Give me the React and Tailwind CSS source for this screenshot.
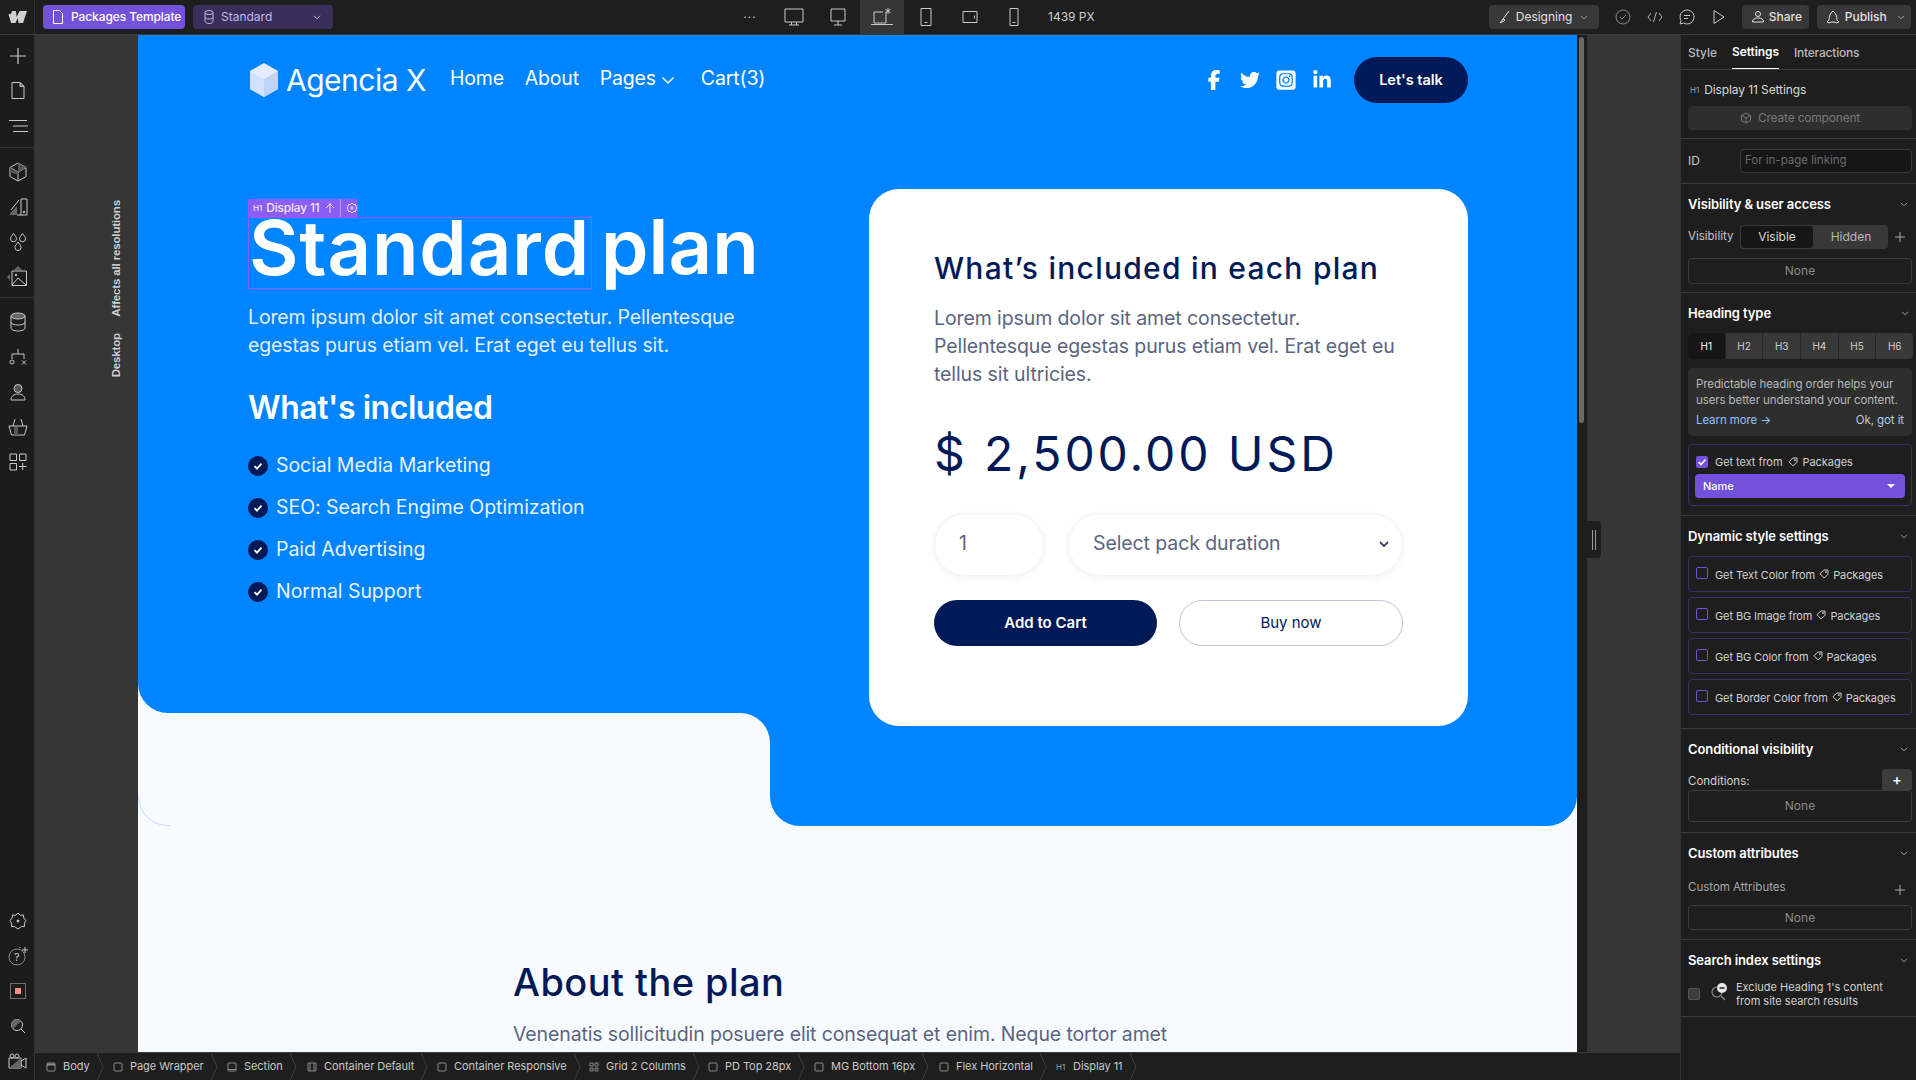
import React from "react";
import { FaFacebookF, FaTwitter, FaLinkedinIn, FaSquareInstagram } from "react-icons/fa6";

const S = ({ w = 16, h = 16, vb, children, className = "" }) => (
  <svg width={w} height={h} viewBox={vb || `0 0 ${w} ${h}`} fill="none" stroke="currentColor" strokeWidth="1" className={"shrink-0 " + className}>{children}</svg>
);
const Chev = ({ className = "" }) => (
  <S w={8} h={5} className={className}><path d="M1 .8l3 3 3-3" /></S>
);
const Tag = () => (
  <S w={10} h={10} className="text-[#d0d0d0]"><path d="M1 4.8L4.8 1H9v4.2L5.2 9z" /><circle cx="6.9" cy="3.1" r=".6" /></S>
);
const Plus = ({ className = "" }) => (
  <S w={12} h={12} className={className}><path d="M6 1v10M1 6h10" /></S>
);

const railTop = [
  <S w={20} h={20}><path d="M10 2v16M2 10h16" strokeWidth="1.2" /></S>,
  <S w={14} h={19}><path d="M1 1.5h8l4 4v12H1z" /><path d="M9 1.5l4 4H9z" fill="#666" /></S>,
  <S w={20} h={14}><path d="M1 1.5h18M5 7h15M5 12.5h15" /></S>,
];
const railMid = [
  <S w={18} h={20}><path d="M9 1l8 4.5v9L9 19l-8-4.5v-9z" /><path d="M1 5.5L9 10l8-4.5M9 10v9" /><path d="M9 1l8 4.5L9 10z M1 5.5L9 10v3l-8-3z" fill="#555" stroke="none" /></S>,
  <S w={20} h={20}><path d="M1 18l8-9v9z" fill="#666" stroke="none" /><path d="M3 13l8-10M13 2h6v16h-6zM9 18h4" /><circle cx="16" cy="15" r=".8" fill="currentColor" /></S>,
  <S w={18} h={20}><path d="M4.5 1.5c2 2.600 3 4 3 5.300a3 3 0 0 1-6 0c0-1.300 1-2.700 3-5.300zM13.500 1.500c2 2.600 3 4 3 5.300a3 3 0 0 1-6 0c0-1.300 1-2.700 3-5.300zM9 10c2 2.600 3 4 3 5.500a3 3 0 0 1-6 0c0-1.500 1-2.900 3-5.500z" /></S>,
  <S w={22} h={22}><path d="M11 0l4 4H7zM0 11l3-3v6z" fill="#666" stroke="none" /><path d="M5 5h14.500v14.500H5z" /><path d="M5 19l6-7 8 7" /><circle cx="9" cy="9" r=".8" fill="currentColor" /></S>,
];
const railCms = [
  <S w={16} h={20}><ellipse cx="8" cy="4" rx="7" ry="3" fill="#666" /><path d="M1 4v12c0 1.700 3 3 7 3s7-1.300 7-3V4M1 10c0 1.700 3 3 7 3s7-1.300 7-3" /></S>,
  <S w={18} h={18}><path d="M9 1v5M3 11V6h12v5" /><circle cx="3" cy="14" r="2" /><path d="M13 12.500l4 4M17 12.500l-4 4" /></S>,
  <S w={16} h={18}><circle cx="8" cy="5.500" r="4" fill="#555" stroke="currentColor" /><path d="M1 17c0-4 3-6 7-6s7 2 7 6z" /></S>,
  <S w={20} h={18}><path d="M1 8h18l-2.500 9h-13zM5 8l2-7M15 8l-2-7" /><path d="M6 9h4v8H6z" fill="#555" stroke="none" /></S>,
  <S w={18} h={18}><path d="M1 1h6.500v6.500H1zM10.500 1H17v6.500h-6.500zM1 10.500h6.500V17H1zM13.700 10v7M10 13.500h7.500" /></S>,
];
const railBottom = [
  <S w={18} h={18}><path d="M9 1l2.200 2.300 3.100-.4.500 3.100L17 8.500l-1.600 2.600.2 3.200-3.200.3L9 17l-3.400-2.400-3.200-.3.200-3.200L1 8.500 3.200 6l.5-3.100 3.100.4z" /><circle cx="9" cy="9" r="1" fill="currentColor" /></S>,
  <S w={20} h={20}><circle cx="9" cy="11" r="8" stroke="#888" /><text x="6" y="15" fontSize="11" fill="currentColor" stroke="none" fontFamily="Inter">?</text><path d="M17 1v6M14 4h6M12 1v1" /></S>,
  <span className="flex w-[16px] h-[16px] items-center justify-center border border-[#707070]"><span className="block w-[6px] h-[6px] bg-[#ff8a8a]" /></span>,
  <S w={16} h={16}><circle cx="7" cy="7" r="5.500" /><path d="M3 11l8-8a5.500 5.500 0 0 0-8 8z" fill="#666" stroke="none" /><path d="M11 11l4 4" /></S>,
  <S w={20} h={16}><path d="M1 5h12v10H1zM13 8l5-3v10l-5-3z" /><path d="M1 15l12-10v10z" fill="#666" stroke="none" /><circle cx="4" cy="3" r="2" /><circle cx="9" cy="3" r="2" /></S>,
];
const RailGroup = ({ items, className = "" }) => (
  <div className={"flex flex-col " + className}>
    {items.map((ic, i) => (
      <div key={i} className="h-[35px] pl-[1px] flex items-center justify-center text-[#c8c8c8]">{ic}</div>
    ))}
  </div>
);

const views = [
  <S w={20} h={20}><path d="M1 2h18v13H1zM7.500 15v3M12.500 15v3M5 18h10" /></S>,
  <S w={16} h={20}><path d="M1 2h14v12H1zM8 14v4M4 18h8" /></S>,
  <S w={22} h={20}><path d="M3 5v11h12V5M0 17.500h22M3 5h9" /><path d="M17 1v6M14.500 2.500l5 3M19.500 2.500l-5 3" /></S>,
  <S w={12} h={20}><path d="M1 1.500h10v17H1zM4.500 15.500h3" /></S>,
  <S w={16} h={14}><path d="M1 1.500h14v11H1zM12.500 5.500v3" /></S>,
  <S w={10} h={20}><path d="M1 1.500h8v17H1zM3.500 15.500h3" /></S>,
];

const Box = () => <S w={10} h={10} className="text-[#8a8a8a]"><rect x="1" y="1" width="8" height="8" rx="1" /></S>;
const crumbs = [
  ["Body", 64, <S w={10} h={10} className="text-[#8a8a8a]"><rect x="1" y="1" width="8" height="8" rx="1" /><path d="M1 2.500h8" strokeWidth="2" /></S>, 11],
  ["Page Wrapper", 117, <Box />, 14],
  ["Section", 79, <S w={10} h={10} className="text-[#8a8a8a]"><rect x="1" y="1" width="8" height="8" rx="1" /><path d="M1 7.500h8" /></S>, 11],
  ["Container Default", 126, <S w={10} h={10} className="text-[#8a8a8a]"><rect x="1" y="1" width="8" height="8" rx="1" /><path d="M3 1v8M7 1v8" /></S>, 12],
  ["Container Responsive", 153, <Box />, 16],
  ["Grid 2 Columns", 118, <S w={10} h={10} className="text-[#8a8a8a]"><path d="M1 1h3v3H1zM6 1h3v3H6zM1 6h3v3H1zM6 6h3v3H6z" /></S>, 15],
  ["PD Top 28px", 109, <Box />, 16],
  ["MG Bottom 16px", 125, <Box />, 13],
  ["Flex Horizontal", 116, <Box />, 13],
  ["Display 11", 90, <span className="text-[8px] text-[#a0a0a0] shrink-0 w-[10px]">H1</span>, 14],
];

const Sep = () => (
  <S w={7} h={28} className="text-[#3e3e3e] ml-auto"><path d="M0 0l6 14-6 14" /></S>
);

const SectionHead = ({ title }) => (
  <div className="h-[40px] pt-[1px] flex items-center justify-between text-white">
    <span className="text-[13px] font-semibold tracking-[-0.1px]">{title}</span>
    <Chev className="text-[#a0a0a0] mr-[4px]" />
  </div>
);
const NoneBox = ({ h }) => (
  <div className={"border border-[#3c3c3c] rounded-[4px] flex items-center justify-center text-[#8a8a8a] text-[12px] " + h}>None</div>
);
const CheckRow = ({ label }) => (
  <div className="h-[36px] border border-[#3a2d6b] rounded-[4px] flex items-start pt-[10px] pl-[7px] text-[#d0d0d0] text-[11px] tracking-[-0.1px]">
    <span className="w-[12px] h-[12px] border border-[#7351dd] rounded-[2px] mr-[7px]" />
    <span className="mr-[4px]">{label}</span>
    <span className="mr-[4px] mt-[2px]"><Tag /></span>
    <span>Packages</span>
  </div>
);

const Check = () => (
  <span className="w-[20px] h-[20px] rounded-full bg-[#001a57] flex items-center justify-center shrink-0 mt-[2px]">
    <svg width="12" height="12" viewBox="0 0 12 12" fill="none" stroke="#fff" strokeWidth="1.800"><path d="M2.500 6.200l2.500 2.500 4.500-5" /></svg>
  </span>
);

export default function App() {
  return (
    <div className="h-screen w-full overflow-hidden flex flex-col bg-[#1e1e1e] font-['Inter',sans-serif] text-[12px] text-[#d8d8d8]">
      {/* top bar */}
      <header className="h-[35px] shrink-0 border-b border-[#3c3c3c] flex items-center bg-[#1e1e1e]">
        <div className="w-[35px] h-full border-r border-[#333] flex items-center justify-center">
          <svg width="20" height="14" viewBox="0 0 20 14" fill="#d0d0d0"><path d="M5 1h4l.6 6L12.500 1H20l-4 12h-4.500l-.7-5-2.300 5H4L1.500 4H3.800z" /></svg>
        </div>
        <div className="ml-[8px] w-[142px] h-[24px] rounded-[4px] bg-[#7351dd] text-white flex items-center pl-[10px] gap-[8px] font-medium">
          <S w={10} h={14}><path d="M.5.500h6l3 3v10h-9z" /></S>
          <span className="tracking-[-0.1px]">Packages Template</span>
        </div>
        <div className="ml-[8px] w-[140px] h-[24px] rounded-[4px] bg-[#3a2f5c] text-[#c3b5e8] flex items-center pl-[11px] gap-[7px]">
          <S w={10} h={14}><ellipse cx="5" cy="2.500" rx="4" ry="2" /><path d="M1 2.500v9c0 1.100 1.800 2 4 2s4-.9 4-2v-9M1 7c0 1.100 1.800 2 4 2s4-.9 4-2" /></S>
          <span>Standard</span>
          <Chev className="ml-auto mr-[12px]" />
        </div>
        <span className="ml-[409px] w-[16px] text-center text-[#c8c8c8] leading-none tracking-[1px] -mt-[6px]">...</span>
        <div className="flex items-center h-full ml-[14px] text-[#c8c8c8]">
          {views.map((v, i) => (
            <div key={i} className={"w-[44px] h-full flex items-center justify-center " + (i === 2 ? "bg-[#363636]" : "")}>{v}</div>
          ))}
        </div>
        <span className="ml-[12px] text-[#d0d0d0]">1439 PX</span>
        <div className="ml-[394px] w-[110px] h-[24px] rounded-[4px] bg-[#383838] flex items-center pl-[10px] gap-[5px] text-[#e0e0e0]">
          <S w={12} h={14}><path d="M10 1L4 9M4 9L1 13l4-2 1-1z" /></S>
          <span>Designing</span>
          <Chev className="ml-[3px] text-[#a0a0a0]" />
        </div>
        <div className="ml-[16px] text-[#8a8a8a]"><S w={16} h={16}><circle cx="8" cy="8" r="7" /><path d="M5 8l2 2 4-4" /></S></div>
        <div className="ml-[16px] text-[#b0b0b0]"><S w={16} h={12}><path d="M4 2L1 6l3 4M12 2l3 4-3 4M9.500 1l-3 10" /></S></div>
        <div className="ml-[16px] text-[#c8c8c8]"><S w={16} h={16}><path d="M8 1a7 7 0 1 1-3.500 13L1 15l1-3.500A7 7 0 0 1 8 1zM5 6.500h6M5 9.500h4" /></S></div>
        <div className="ml-[17px] text-[#c8c8c8]"><S w={14} h={16}><path d="M2 1.500l10 6.500-10 6.500z" /></S></div>
        <div className="ml-[16px] w-[67px] h-[24px] rounded-[4px] bg-[#383838] flex items-center pl-[10px] gap-[5px] text-[#e0e0e0] font-medium">
          <S w={12} h={14}><circle cx="6" cy="4" r="2.500" /><path d="M.5 12c0-3 2-4 5.500-4s5.500 1 5.500 4z" /></S>
          <span>Share</span>
        </div>
        <div className="ml-[8px] w-[94px] h-[24px] rounded-[4px] bg-[#383838] flex items-center pl-[9px] gap-[5px] text-[#e0e0e0] font-medium">
          <S w={14} h={14}><path d="M7 1c3 2 4 6 4 9l2 2-3 1-1-1H5l-1 1-3-1 2-2c0-3 1-7 4-9z" /></S>
          <span>Publish</span>
          <Chev className="ml-[5px] text-[#a0a0a0]" />
        </div>
      </header>

      <div className="flex-1 min-h-0 flex">
        {/* rail */}
        <aside className="w-[35px] shrink-0 border-r border-[#333] bg-[#1c1c1c] flex flex-col">
          <RailGroup items={railTop} className="pt-[3px] pb-[4px] border-b border-[#333]" />
          <RailGroup items={railMid} className="pt-[6px] pb-[3px] border-b border-[#333]" />
          <RailGroup items={railCms} className="pt-[6px]" />
          <RailGroup items={railBottom} className="mt-auto pb-[2px]" />
        </aside>

        {/* center */}
        <div className="flex-1 min-w-0 flex flex-col">
          <div className="flex-1 min-h-0 flex bg-[#363636]">
            <div className="w-[103px] shrink-0 flex flex-col items-end pr-[13px] pt-[165px] gap-[16px] text-[11.500px] font-bold tracking-[-0.15px] font-['Liberation_Sans',sans-serif] text-[#cfcfcf]">
              <span className="[writing-mode:vertical-rl] rotate-180">Affects all resolutions</span>
              <span className="[writing-mode:vertical-rl] rotate-180">Desktop</span>
            </div>

            {/* page */}
            <main className="w-[1439px] shrink-0 overflow-hidden bg-[#f7fbff] font-['Inter',sans-serif] text-[#001a57]">
              <section className="h-[791px] flex flex-col">
                <div className="h-[678px] shrink-0 bg-[#0084ff] rounded-bl-[30px] pl-[110px] pr-[109px] pt-[22px] text-white">
                  <nav className="h-[46px] flex items-center">
                    <svg width="28" height="34" viewBox="0 0 28 34" className="ml-[2px] shrink-0"><path d="M14 0l14 8v18l-14 8L0 26V8z" fill="#e3edff" /><path d="M14 16L0 8v18l14 8z" fill="#d3e1ff" /><path d="M14 16l14-8v18l-14 8z" fill="#bfd3fb" /></svg>
                    <span className="ml-[8px] text-[30px] tracking-[-0.5px] leading-none whitespace-nowrap">Agencia X</span>
                    <span className="ml-[24px] text-[19.500px] tracking-[-0.2px] -mt-[3px]">Home</span>
                    <span className="ml-[21px] text-[19.500px] tracking-[-0.2px] -mt-[3px]">About</span>
                    <span className="ml-[21px] text-[19.500px] tracking-[-0.2px] -mt-[3px]">Pages</span>
                    <svg width="14" height="9" viewBox="0 0 14 9" fill="none" stroke="#fff" strokeWidth="1.500" className="ml-[5px]"><path d="M1.500 1.500l5.500 5.500 5.500-5.500" /></svg>
                    <span className="ml-[26px] text-[19.500px] tracking-[-0.15px] -mt-[3px]">Cart(3)</span>
                    <div className="ml-auto flex items-center text-[20px]">
                      <FaFacebookF />
                      <FaTwitter className="ml-[16px]" />
                      <FaSquareInstagram className="ml-[15px] text-[22px]" />
                      <FaLinkedinIn className="ml-[15px]" />
                    </div>
                    <button className="ml-[22px] w-[114px] h-[46px] rounded-[23px] bg-[#001a57] text-white text-[14.500px] font-semibold">Let's talk</button>
                  </nav>

                  <div className="mt-[86px] flex">
                    <div className="flex-1 pt-[28px] relative">
                      <div className="absolute left-0 top-[10px] h-[18px] w-[110px] bg-[#8b5cf6] rounded-t-[1px] flex items-center text-[#f0eaff] text-[12px] font-medium leading-none">
                        <span className="text-[8px] ml-[5px] mr-[4px]">H1</span>
                        <span className="tracking-[-0.2px]">Display 11</span>
                        <S w={10} h={12} className="ml-[5px]"><path d="M5 1v10M1 6l4-4 4 4" /></S>
                        <span className="ml-[5px] mr-[5px] w-px h-[18px] bg-[#b79cff]" />
                        <S w={12} h={12}><path d="M6 1l1.500 1.500 2 0 .5 2L11 6l-1 1.500-.5 2-2 0L6 11 4.500 9.500l-2 0-.5-2L1 6l1-1.500.5-2 2 0z" /><circle cx="6" cy="6" r="1.200" /></S>
                      </div>
                      <h1 className="flex gap-[9px] text-[76px] font-semibold leading-[59px] h-[71px]">
                        <span className="w-[344px] h-[72px] border border-[#8b5cf6] tracking-[0.9px]">Standard</span>
                        <span className="tracking-[0.1px]">plan</span>
                      </h1>
                      <p className="mt-[15px] w-[520px] text-[19.500px] leading-[28px] text-[#e3efff] tracking-[-0.15px]">Lorem ipsum dolor sit amet consectetur. Pellentesque egestas purus etiam vel. Erat eget eu tellus sit.</p>
                      <h2 className="mt-[29px] text-[32px] font-semibold leading-[40px] tracking-[-0.45px]">What's included</h2>
                      <ul className="mt-[23px] flex flex-col gap-[14px] text-[19.500px] leading-[28px] text-[#eaf3ff]">
                        {["Social Media Marketing", "SEO: Search Engime Optimization", "Paid Advertising", "Normal Support"].map((t) => (
                          <li key={t} className="flex items-center gap-[8px]"><Check /><span className="tracking-[-0.05px]">{t}</span></li>
                        ))}
                      </ul>
                    </div>

                    <div className="relative z-10 w-[599px] h-[537px] shrink-0 rounded-[30px] bg-white pl-[65px] pr-[65px] pt-[61px] text-[#001a57]">
                      <h2 className="text-[30px] font-medium leading-[36px] tracking-[1.25px] whitespace-nowrap">What’s included in each plan</h2>
                      <p className="mt-[18px] text-[19.500px] leading-[28px] text-[#5a6580] tracking-[-0.1px]">Lorem ipsum dolor sit amet consectetur. Pellentesque egestas purus etiam vel. Erat eget eu tellus sit ultricies.</p>
                      <div className="mt-[38px] text-[48px] font-normal leading-[56px] tracking-[2.900px] whitespace-nowrap">$ 2,500.00 USD</div>
                      <div className="mt-[31px] flex gap-[24px]">
                        <div className="w-[110px] h-[63px] rounded-[32px] border border-[#f0f3f9] shadow-[0_2px_6px_rgba(0,40,120,0.06)] flex items-center pl-[24px] text-[19.500px] text-[#5a6580]"><span className="-mt-[2px]">1</span></div>
                        <div className="w-[335px] h-[63px] rounded-[32px] border border-[#f0f3f9] shadow-[0_2px_6px_rgba(0,40,120,0.06)] flex items-center pl-[24px] pr-[13px] text-[19.500px] text-[#5a6580]">
                          <span className="-mt-[2px] tracking-[-0.1px]">Select pack duration</span>
                          <svg width="10" height="7" viewBox="0 0 10 7" fill="none" stroke="#3c4660" strokeWidth="1.800" className="ml-auto"><path d="M1 1l4 4 4-4" /></svg>
                        </div>
                      </div>
                      <div className="mt-[24px] flex gap-[22px]">
                        <button className="w-[223px] h-[46px] rounded-[23px] bg-[#001a57] text-white text-[15px] font-semibold">Add to Cart</button>
                        <button className="w-[224px] h-[46px] rounded-[23px] border border-[#bcc3d6] text-[#001a57] text-[15px]">Buy now</button>
                      </div>
                    </div>
                  </div>
                </div>

                <div className="flex-1 flex bg-[linear-gradient(to_bottom,#0084ff_50%,#f7fbff_50%)]">
                  <div className="relative w-[632px] bg-[#f7fbff] rounded-tr-[30px]">
                    <div className="absolute left-0 bottom-0 w-[32px] h-[30px] border-l border-b border-[#c4e0ff] rounded-bl-[30px]" />
                  </div>
                  <div className="flex-1 bg-[#0084ff] rounded-bl-[30px] rounded-br-[30px]" />
                </div>
              </section>

              <section className="pt-[134px] pl-[375px]">
                <h2 className="text-[38px] font-medium leading-[44px] tracking-[0.45px]">About the plan</h2>
                <p className="mt-[16px] text-[19.500px] leading-[28px] text-[#5a6580] whitespace-nowrap tracking-[-0.12px]">Venenatis sollicitudin posuere elit consequat et enim. Neque tortor amet</p>
              </section>
            </main>

            {/* scroll track */}
            <div className="w-[10px] shrink-0 bg-[#1e1e1e] pt-[2px] pl-[2px] pr-[3px]">
              <div className="h-[386px] rounded-full bg-[#6a6a6a]" />
            </div>
            <div className="flex-1 pt-[486px]">
              <div className="w-[14px] h-[37px] rounded-r-[4px] bg-[#1e1e1e] flex items-center justify-center gap-[2px]">
                <span className="w-px h-[20px] bg-[#9a9a9a]" />
                <span className="w-px h-[20px] bg-[#9a9a9a]" />
              </div>
            </div>
          </div>

          {/* breadcrumbs */}
          <footer className="h-[28px] shrink-0 border-t border-[#3c3c3c] flex items-center text-[11px] text-[#c8c8c8] tracking-[-0.05px]">
            {crumbs.map(([t, w, ic, pl]) => (
              <div key={t} style={{ width: w, paddingLeft: pl }} className="h-full flex items-center gap-[7px] shrink-0 whitespace-nowrap">
                {ic}
                <span>{t}</span>
                <Sep />
              </div>
            ))}
          </footer>
        </div>

        {/* right panel */}
        <aside className="w-[236px] shrink-0 border-l border-[#333] bg-[#1e1e1e] text-[#d8d8d8] flex flex-col">
          <div className="h-[35px] shrink-0 border-b border-[#3c3c3c] pl-[7px] pr-[4px] pt-[1px] flex items-center gap-[15px] text-[12px] font-medium">
            <span className="text-[#b8b8b8]">Style</span>
            <span className="h-full flex items-center border-b border-white text-white font-semibold tracking-[-0.1px]">Settings</span>
            <span className="text-[#b8b8b8] tracking-[-0.2px]">Interactions</span>
          </div>
          <div className="h-[69px] shrink-0 border-b border-[#3c3c3c] pl-[7px] pr-[4px] pt-[10px]">
            <div className="h-[20px] flex items-center gap-[5px] text-[#d8d8d8] text-[12px]"><span className="text-[8px] text-[#a0a0a0] ml-[2px]">H1</span><span className="tracking-[-0.1px]">Display 11 Settings</span></div>
            <div className="mt-[6px] h-[24px] rounded-[4px] bg-[#2e2e2e] flex items-center justify-center gap-[6px] text-[#787878]">
              <S w={12} h={12}><path d="M6 1l4.500 2.500v5L6 11 1.500 8.500v-5zM1.500 3.500L6 6l4.500-2.500M6 6v5" /></S>
              <span className="tracking-[-0.2px]">Create component</span>
            </div>
          </div>
          <div className="h-[45px] shrink-0 border-b border-[#3c3c3c] pl-[7px] pr-[4px] pt-[10px] flex">
            <span className="w-[52px] h-[24px] flex items-center text-[#c8c8c8]">ID</span>
            <div className="w-[172px] h-[24px] rounded-[4px] bg-[#161616] border border-[#3a3a3a] flex items-center pl-[4px] text-[#6a6a6a] text-[11.500px]">For in-page linking</div>
          </div>
          <div className="h-[109px] shrink-0 border-b border-[#3c3c3c] pl-[7px] pr-[4px]">
            <SectionHead title="Visibility & user access" />
            <div className="mt-[1px] h-[24px] flex items-center">
              <span className="w-[52px] text-[#c8c8c8] text-[11.500px]">Visibility</span>
              <div className="w-[148px] h-[24px] rounded-[4px] bg-[#383838] flex text-[#b8b8b8]">
                <span className="w-[74px] bg-[#161616] rounded-[4px] border border-[#3a3a3a] flex items-center justify-center text-[#d8d8d8]">Visible</span>
                <span className="flex-1 flex items-center justify-center">Hidden</span>
              </div>
              <Plus className="ml-[6px] text-[#a8a8a8]" />
            </div>
            <NoneBox h="mt-[9px] h-[26px]" />
          </div>
          <div className="h-[223px] shrink-0 border-b border-[#3c3c3c] pl-[7px] pr-[3px]">
            <SectionHead title="Heading type" />
            <div className="h-[26px] rounded-[4px] bg-[#383838] flex text-[10px] text-[#d0d0d0]">
              {["H1", "H2", "H3", "H4", "H5", "H6"].map((h, i) => (
                <span key={h} className={"flex-1 flex items-center justify-center border-r border-[#262626] last:border-r-0 " + (i === 0 ? "bg-[#161616] rounded-l-[4px] text-white" : "")}>{h}</span>
              ))}
            </div>
            <div className="mt-[9px] mr-[1px] h-[68px] rounded-[4px] bg-[#2e2e2e] px-[8px] pt-[8px] text-[11.500px] leading-[16px] text-[#b8b8b8] tracking-[-0.1px]">
              <p className="whitespace-nowrap">Predictable heading order helps your<br />users better understand your content.</p>
              <div className="mt-[4px] flex justify-between"><span className="text-[#8ac2ff]">Learn more →</span><span className="text-[#b8cbe0]">Ok, got it</span></div>
            </div>
            <div className="mt-[8px] mr-[1px] h-[62px] border border-[#3a2d6b] rounded-[4px] px-[6px] pt-[11px]">
              <div className="flex items-center text-[11px] text-[#d0d0d0] h-[12px] tracking-[-0.05px]">
                <span className="ml-[1px] w-[12px] h-[12px] bg-[#7351dd] rounded-[2px] flex items-center justify-center mr-[7px]">
                  <svg width="10" height="10" viewBox="0 0 10 10" fill="none" stroke="#fff" strokeWidth="1.600"><path d="M1.500 5l2.500 2.500 4.500-5" /></svg>
                </span>
                <span className="mr-[5px]">Get text from</span>
                <span className="mr-[5px]"><Tag /></span>
                <span>Packages</span>
              </div>
              <div className="mt-[6px] h-[24px] rounded-[4px] bg-[#7351dd] text-white text-[11px] font-medium flex items-center justify-between pl-[8px] pr-[10px]">
                <span>Name</span>
                <span className="w-0 h-0 border-x-[4px] border-x-transparent border-t-[4px] border-t-white" />
              </div>
            </div>
          </div>
          <div className="h-[213px] shrink-0 border-b border-[#3c3c3c] pl-[7px] pr-[4px]">
            <SectionHead title="Dynamic style settings" />
            <div className="flex flex-col gap-[5px]">
              <CheckRow label="Get Text Color from" />
              <CheckRow label="Get BG Image from" />
              <CheckRow label="Get BG Color from" />
              <CheckRow label="Get Border Color from" />
            </div>
          </div>
          <div className="h-[104px] shrink-0 border-b border-[#3c3c3c] pl-[7px] pr-[4px]">
            <SectionHead title="Conditional visibility" />
            <div className="h-[21px] flex items-end justify-between">
              <span className="text-[11.500px] text-[#d0d0d0]">Conditions:</span>
              <span className="w-[30px] h-[21px] bg-[#3c3c3c] rounded-t-[4px] flex items-center justify-center text-white text-[14px] font-semibold">+</span>
            </div>
            <NoneBox h="h-[32px]" />
          </div>
          <div className="h-[107px] shrink-0 border-b border-[#3c3c3c] pl-[7px] pr-[4px]">
            <SectionHead title="Custom attributes" />
            <div className="h-[28px] pt-[2px] flex items-center justify-between text-[#a8a8a8] text-[11.500px]">
              <span>Custom Attributes</span>
              <Plus className="mr-[6px] mt-[3px]" />
            </div>
            <NoneBox h="mt-[4px] h-[25px]" />
          </div>
          <div className="h-[77px] shrink-0 border-b border-[#3c3c3c] pl-[7px] pr-[4px]">
            <SectionHead title="Search index settings" />
            <div className="flex items-start">
              <span className="mt-[8px] w-[12px] h-[12px] rounded-[2px] bg-[#3c3c3c] border border-[#555]" />
              <svg width="18" height="18" viewBox="0 0 18 18" fill="none" stroke="#8a8a8a" strokeWidth="1.200" className="ml-[10px] mt-[3px]"><circle cx="7" cy="9" r="5" /><path d="M11 13l4 4" /><circle cx="12" cy="5" r="5" fill="#e8e8e8" stroke="none" /><path d="M9.500 5h5" stroke="#1e1e1e" strokeWidth="1.500" /></svg>
              <p className="ml-[8px] text-[11px] leading-[14px] text-[#d0d0d0]">Exclude Heading 1's content<br />from site search results</p>
            </div>
          </div>
        </aside>
      </div>
    </div>
  );
}
